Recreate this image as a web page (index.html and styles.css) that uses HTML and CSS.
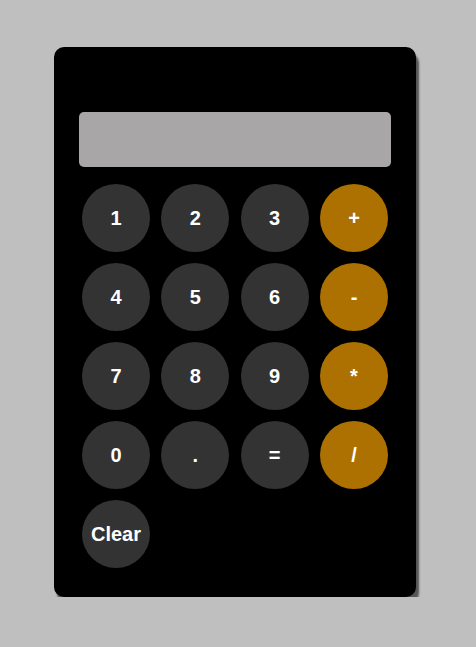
FILE: index.html
```html
<!DOCTYPE html>
<html lang="en">
<head>
  <meta charset="UTF-8" />
  <title>Calculator</title>
  <link rel="stylesheet" href="styles.css">
</head>
<body>

<div class="calculator">
  <div class="display" id="display"></div>
  <div class="keys">
    <button class="key">1</button>
    <button class="key">2</button>
    <button class="key">3</button>
    <button class="key operator">+</button>
    <button class="key">4</button>
    <button class="key">5</button>
    <button class="key">6</button>
    <button class="key operator">-</button>
    <button class="key">7</button>
    <button class="key">8</button>
    <button class="key">9</button>
    <button class="key operator">*</button>
    <button class="key">0</button>
    <button class="key">.</button>
    <button class="key">=</button>
    <button class="key operator">/</button>
    <button class="key">Clear</button>
  </div>
</div>

</body>
</html>
```

FILE: styles.css
```css
body {
  margin: 0;
  background-color: #bfbfbf;
  font-family: "Liberation Sans", Arial, sans-serif;
}

.calculator {
  width: 312px;
  margin: 47px 0 0 54px;
  padding: 65px 25px 29px 25px;
  background-color: #000;
  border-radius: 10px;
  box-shadow: 3px 6px 2px #555;
}

.display {
  height: 55px;
  background-color: #a8a6a6;
  border-radius: 5px;
}

.keys {
  display: grid;
  grid-template-columns: repeat(4, 68px);
  grid-auto-rows: 68px;
  justify-content: space-between;
  row-gap: 11px;
  margin-top: 17px;
  padding: 0 3px;
}

.key {
  width: 68px;
  height: 68px;
  padding: 0;
  border: none;
  border-radius: 50%;
  background-color: #333;
  color: #fff;
  font-family: inherit;
  font-size: 20px;
  font-weight: bold;
  cursor: pointer;
}

.key.operator {
  background-color: #ad7102;
}
```
